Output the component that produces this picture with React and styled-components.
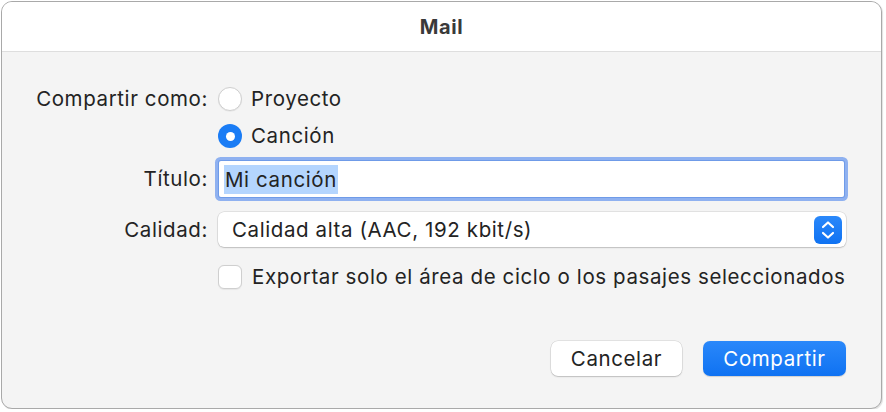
import React from "react";
import styled, { createGlobalStyle } from "styled-components";

const GlobalStyle = createGlobalStyle`
  html, body {
    margin: 0;
    padding: 0;
    background: #ffffff;
  }
  body {
    font-family: Inter, "Helvetica Neue", "Liberation Sans", sans-serif;
    color: #232323;
  }
`;

const Window = styled.div`
  margin: 1px 0 0 1px;
  width: 881px;
  height: 408px;
  box-sizing: border-box;
  border: 1px solid #a9a9a9;
  border-radius: 11px;
  overflow: hidden;
  background: #f4f4f4;
  box-shadow: 1px 1px 1px rgba(0, 0, 0, 0.12);
  display: flex;
  flex-direction: column;
`;

const TitleBar = styled.div`
  height: 49px;
  flex: none;
  background: #ffffff;
  border-bottom: 1px solid #dedede;
  display: flex;
  align-items: center;
  justify-content: center;
  font-size: 20px;
  letter-spacing: 0.6px;
  font-weight: 700;
  color: #3a3a3a;
`;

const Body = styled.div`
  flex: 1;
  display: flex;
  flex-direction: column;
  padding: 35px 35px 0 15px;
  font-size: 20.5px;
  letter-spacing: 0.6px;
`;

const Form = styled.div`
  display: grid;
  grid-template-columns: 191px 1fr;
  column-gap: 10px;
  align-items: center;
`;

const Label = styled.div`
  grid-column: 1;
  text-align: right;
  line-height: 24px;
  white-space: nowrap;
  margin-top: ${(p) => p.$mt || 0}px;
`;

const Control = styled.div`
  grid-column: 2;
  display: flex;
  align-items: center;
  height: ${(p) => p.$h || 24}px;
  margin-top: ${(p) => p.$mt || 0}px;
`;

const Radio = styled.span`
  width: 24px;
  height: 24px;
  box-sizing: border-box;
  border-radius: 50%;
  flex: none;
  display: flex;
  align-items: center;
  justify-content: center;
  background: ${(p) => (p.$on ? "#1a7cf5" : "#ffffff")};
  border: ${(p) => (p.$on ? "none" : "1px solid #cfcfcf")};
  box-shadow: ${(p) => (p.$on ? "none" : "0 0.5px 1px rgba(0,0,0,0.08)")};
  &::after {
    content: "";
    display: ${(p) => (p.$on ? "block" : "none")};
    width: 9px;
    height: 9px;
    border-radius: 50%;
    background: #ffffff;
  }
`;

const Checkbox = styled.span`
  width: 24px;
  height: 24px;
  box-sizing: border-box;
  flex: none;
  border-radius: 6px;
  background: #ffffff;
  border: 1px solid #cfcfcf;
  box-shadow: 0 0.5px 1px rgba(0, 0, 0, 0.06);
`;

const OptionText = styled.span`
  line-height: 24px;
  margin-left: ${(p) => p.$ml || 9}px;
  white-space: nowrap;
`;

const TextField = styled.div`
  flex: 1;
  height: 36px;
  margin-left: 1px;
  margin-right: 2px;
  background: #ffffff;
  border-radius: 2px;
  box-shadow: 0 0 0 1px #6f9be8, 0 0 0 4px #8fb1f0;
  display: flex;
  align-items: center;
  padding-left: 5px;
`;

const Selection = styled.span`
  background: #b4d5fe;
  line-height: 29px;
  padding: 0 1px;
`;

const Popup = styled.div`
  flex: 1;
  height: 35px;
  box-sizing: border-box;
  background: #ffffff;
  border-radius: 6px;
  box-shadow: 0 0 0 0.5px rgba(0, 0, 0, 0.14), 0 1px 1.5px rgba(0, 0, 0, 0.16);
  display: flex;
  align-items: center;
  justify-content: space-between;
  padding: 0 4px 0 14px;
`;

const Stepper = styled.span`
  width: 28px;
  height: 28px;
  border-radius: 6px;
  background: linear-gradient(#2a88fa, #0f72f2);
  display: flex;
  align-items: center;
  justify-content: center;
`;

const Footer = styled.div`
  display: flex;
  justify-content: flex-end;
  gap: 21px;
  margin-top: 52px;
`;

const Button = styled.button`
  height: 35px;
  width: ${(p) => p.$w}px;
  border: none;
  border-radius: 7px;
  font-family: inherit;
  font-size: inherit;
  letter-spacing: inherit;
  color: ${(p) => (p.$primary ? "#ffffff" : "#232323")};
  background: ${(p) =>
    p.$primary ? "linear-gradient(#2a88fa, #0f72f2)" : "#ffffff"};
  box-shadow: ${(p) =>
    p.$primary
      ? "0 0.5px 1px rgba(0,0,0,0.15)"
      : "0 0 0 0.5px rgba(0,0,0,0.14), 0 1px 1.5px rgba(0,0,0,0.16)"};
  padding: 0;
`;

function Chevrons() {
  return (
    <svg width="16" height="22" viewBox="0 0 16 22" fill="none">
      <path
        d="M3 8 L8 3.5 L13 8"
        stroke="#fff"
        strokeWidth="2.2"
        strokeLinecap="round"
        strokeLinejoin="round"
      />
      <path
        d="M3 14 L8 18.5 L13 14"
        stroke="#fff"
        strokeWidth="2.2"
        strokeLinecap="round"
        strokeLinejoin="round"
      />
    </svg>
  );
}

export default function App() {
  return (
    <>
      <GlobalStyle />
      <Window>
        <TitleBar>Mail</TitleBar>
        <Body>
          <Form>
            <Label>Compartir como:</Label>
            <Control>
              <Radio />
              <OptionText>Proyecto</OptionText>
            </Control>

            <Control $mt={13}>
              <Radio $on />
              <OptionText>Canción</OptionText>
            </Control>

            <Label $mt={13}>Título:</Label>
            <Control $h={36} $mt={13}>
              <TextField>
                <Selection>Mi canción</Selection>
              </TextField>
            </Control>

            <Label $mt={15}>Calidad:</Label>
            <Control $h={35} $mt={15}>
              <Popup>
                <span>Calidad alta (AAC, 192 kbit/s)</span>
                <Stepper>
                  <Chevrons />
                </Stepper>
              </Popup>
            </Control>

            <Control $mt={18}>
              <Checkbox />
              <OptionText $ml={10}>
                Exportar solo el área de ciclo o los pasajes seleccionados
              </OptionText>
            </Control>
          </Form>
          <Footer>
            <Button $w={131}>Cancelar</Button>
            <Button $w={143} $primary>
              Compartir
            </Button>
          </Footer>
        </Body>
      </Window>
    </>
  );
}
